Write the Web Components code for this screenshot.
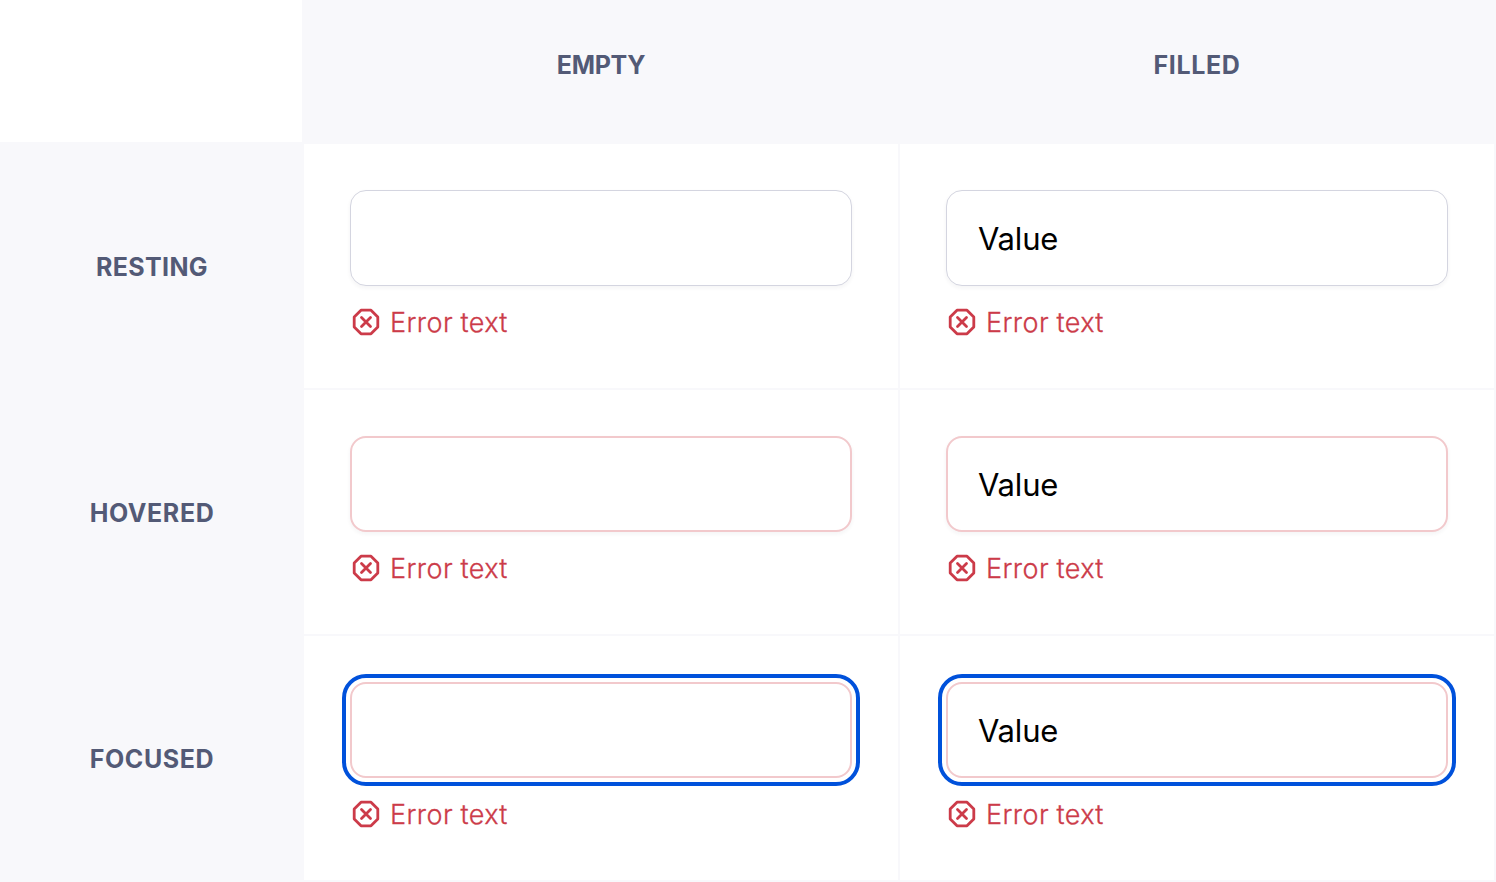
<!DOCTYPE html>
<html lang="en">
<head>
<meta charset="utf-8">
<title>Text input states</title>
<style>
    body {
        margin: 0;
        background: #fff;
        font-family: Inter, "Liberation Sans", sans-serif;
    }
</style>
</head>
<body>
<state-table></state-table>
<script>
class ErrorText extends HTMLElement {
    constructor() {
        super();
        this.attachShadow({ mode: 'open' });
    }

    connectedCallback() {
        this.shadowRoot.innerHTML = `
            <style>
                :host {
                    display: flex;
                    align-items: center;
                    gap: 8px;
                    height: 40px;
                    color: #cc3b49;
                    font-size: 27px;
                    line-height: 40px;
                    letter-spacing: 0.4px;
                    word-spacing: -0.5px;
                    font-weight: 300;
                    -webkit-text-stroke: 0.3px;
                }

                svg {
                    display: block;
                    flex: none;
                }

                span {
                    padding-top: 1px;
                }
            </style>
            <svg width="32" height="32" viewBox="0 0 32 32" fill="none" stroke="currentColor" stroke-width="2.8">
                <path d="M11 4.2h10L27.8 11v10L21 27.8H11L4.2 21V11z" stroke-linejoin="round"/>
                <path d="M11.5 11.5l9 9M20.5 11.5l-9 9" stroke-linecap="round"/>
            </svg>
            <span><slot></slot></span>
        `;
    }
}

class TextField extends HTMLElement {
    constructor() {
        super();
        this.attachShadow({ mode: 'open' });
    }

    connectedCallback() {
        this.shadowRoot.innerHTML = `
            <style>
                :host {
                    display: block;
                }

                .box {
                    box-sizing: border-box;
                    height: 96px;
                    padding: 0 31px;
                    border: 1px solid #d4d5e0;
                    border-radius: 16px;
                    background: #fff;
                    box-shadow: 0 2px 4px rgba(39, 39, 53, 0.05);
                    color: #000;
                    font-size: 31px;
                    line-height: 95px;
                    letter-spacing: -0.2px;
                }

                :host([state="hovered"]) .box,
                :host([state="focused"]) .box {
                    padding: 0 30px;
                    border: 2px solid #f2c9cc;
                    line-height: 93px;
                }

                :host([state="focused"]) .box {
                    outline: 4px solid #0051db;
                    outline-offset: 4px;
                    box-shadow: none;
                }

                error-text {
                    margin-top: 16px;
                }
            </style>
            <div class="box"><slot></slot></div>
            <error-text>Error text</error-text>
        `;
    }
}

class HeadingCell extends HTMLElement {
    constructor() {
        super();
        this.attachShadow({ mode: 'open' });
    }

    connectedCallback() {
        this.shadowRoot.innerHTML = `
            <style>
                :host {
                    display: flex;
                    align-items: center;
                    justify-content: center;
                    box-sizing: border-box;
                    background: #f8f8fb;
                    color: #535a76;
                    font-size: 25px;
                    font-weight: 700;
                    line-height: 32px;
                    letter-spacing: 0.6px;
                    text-transform: uppercase;
                }

                :host([column]) {
                    padding: 0 2px 14px 0;
                }
            </style>
            <span><slot></slot></span>
        `;
    }
}

class StateTable extends HTMLElement {
    constructor() {
        super();
        this.attachShadow({ mode: 'open' });
    }

    connectedCallback() {
        const rows = ['Resting', 'Hovered', 'Focused'].map((name) => {
            const state = name.toLowerCase();
            return `
                <heading-cell class="${state}">${name}</heading-cell>
                <div class="cell"><text-field state="${state}"></text-field></div>
                <div class="cell"><text-field state="${state}">Value</text-field></div>
            `;
        }).join('');

        this.shadowRoot.innerHTML = `
            <style>
                :host {
                    display: grid;
                    grid-template-columns: 304px 1fr 1fr;
                    grid-template-rows: 144px repeat(3, 246px);
                }

                .corner,
                .cell {
                    box-sizing: border-box;
                    border: solid #f8f8fb;
                    border-width: 0 2px 2px 0;
                    background: #fff;
                }

                .cell {
                    padding: 46px;
                }

                .empty {
                    letter-spacing: -0.3px;
                }

                .resting {
                    letter-spacing: 0.35px;
                }
            </style>
            <div class="corner"></div>
            <heading-cell column class="empty">Empty</heading-cell>
            <heading-cell column class="filled">Filled</heading-cell>
            ${rows}
        `;
    }
}

customElements.define('error-text', ErrorText);
customElements.define('text-field', TextField);
customElements.define('heading-cell', HeadingCell);
customElements.define('state-table', StateTable);
</script>
</body>
</html>
